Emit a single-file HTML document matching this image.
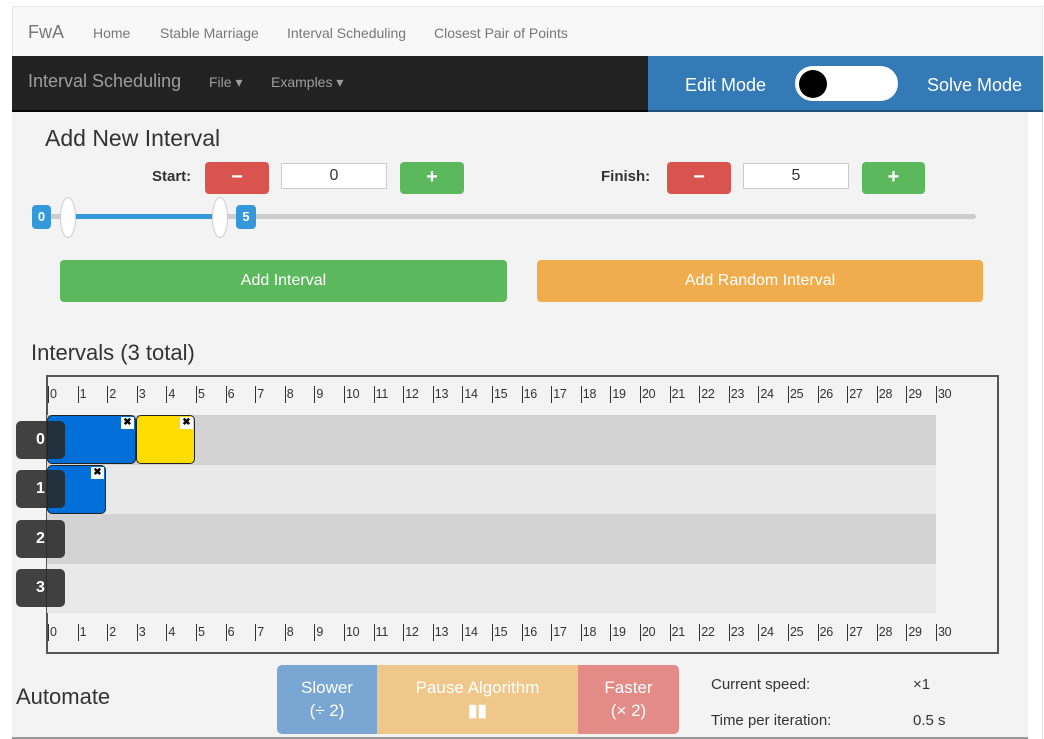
<!DOCTYPE html>
<html><head><meta charset="utf-8"><style>
*{box-sizing:border-box;margin:0;padding:0}
body{width:1044px;height:739px;background:#fff;font-family:"Liberation Sans",Arial,sans-serif;position:relative;overflow:hidden;color:#333}
.a{position:absolute}
.nav1{left:12px;top:6px;width:1031px;height:50px;background:#f8f8f8;border:1px solid #e7e7e7;border-bottom:none}
.nav1 span{position:absolute;top:18px;font-size:14px;color:#777}
.dark{left:12px;top:56px;width:636px;height:56px;background:#222;border-bottom:2px solid #080808}
.blue{left:648px;top:56px;width:395px;height:56px;background:#337ab7;border-bottom:2px solid #1f4e78}
.content{left:12px;top:112px;width:1016px;height:627px;background:#f3f3f3}
.btn{position:absolute;border-radius:4px;color:#fff;text-align:center;font-weight:bold}
.inp{position:absolute;background:#fff;border:1px solid #ccc;text-align:center;font-size:16px;line-height:24px}
.tick{position:absolute;font-size:12.5px;color:#333;border-left:1px solid #333;padding-left:1px;height:17px;line-height:17px;letter-spacing:-0.3px}
.lane{position:absolute;left:47px;width:889px;height:49.5px}
.lbl{position:absolute;left:16px;width:49px;height:38px;background:rgba(40,40,40,.88);border-radius:5px;color:#fff;font-weight:bold;font-size:16px;line-height:38px;text-align:center}
.iv{position:absolute;border:1px solid #222;border-radius:5px}
.x{position:absolute;top:1px;right:1px;width:13px;height:12px;background:#fff;font-size:10px;font-weight:bold;line-height:12px;text-align:center;color:#000}
</style></head><body>
<div class="a nav1">
<span style="left:15px;top:15px;font-size:18px">FwA</span>
<span style="left:80px">Home</span>
<span style="left:147px">Stable Marriage</span>
<span style="left:274px">Interval Scheduling</span>
<span style="left:421px">Closest Pair of Points</span>
</div>
<div class="a dark">
<span class="a" style="left:16px;top:15px;font-size:18px;color:#9d9d9d">Interval Scheduling</span>
<span class="a" style="left:197px;top:18px;font-size:14px;color:#9d9d9d">File ▾</span>
<span class="a" style="left:259px;top:18px;font-size:14px;color:#9d9d9d">Examples ▾</span>
</div>
<div class="a blue">
<span class="a" style="left:37px;top:19px;font-size:18px;color:#fff">Edit Mode</span>
<div class="a" style="left:147px;top:10px;width:103px;height:35px;background:#fff;border-radius:18px"></div>
<div class="a" style="left:151px;top:14px;width:28px;height:28px;background:#000;border-radius:50%"></div>
<span class="a" style="left:279px;top:19px;font-size:18px;color:#fff">Solve Mode</span>
</div>
<div class="a content"></div>
<div class="a" style="left:45px;top:125px;font-size:23px;color:#333">Add New Interval</div>
<div class="a" style="left:152px;top:168px;font-size:15px;font-weight:bold">Start:</div>
<div class="btn" style="left:205px;top:162px;width:64px;height:32px;background:#d9534f;font-size:20px;line-height:30px">−</div>
<div class="inp" style="left:281px;top:163px;width:106px;height:26px">0</div>
<div class="btn" style="left:400px;top:162px;width:64px;height:32px;background:#5cb85c;font-size:20px;line-height:30px">+</div>
<div class="a" style="left:601px;top:168px;font-size:15px;font-weight:bold">Finish:</div>
<div class="btn" style="left:667px;top:162px;width:64px;height:32px;background:#d9534f;font-size:20px;line-height:30px">−</div>
<div class="inp" style="left:743px;top:163px;width:106px;height:26px">5</div>
<div class="btn" style="left:862px;top:162px;width:63px;height:32px;background:#5cb85c;font-size:20px;line-height:30px">+</div>
<div class="a" style="left:40px;top:214px;width:936px;height:5px;background:#ccc;border-radius:3px"></div>
<div class="a" style="left:68px;top:214px;width:152px;height:5px;background:#3498db"></div>
<div class="btn" style="left:32px;top:205px;width:19px;height:24px;background:#3498db;font-size:13px;line-height:24px">0</div>
<div class="btn" style="left:236px;top:205px;width:20px;height:24px;background:#3498db;font-size:13px;line-height:24px">5</div>
<div class="a" style="left:60px;top:197px;width:16px;height:41px;background:#fff;border:1px solid #ccc;border-radius:50%"></div>
<div class="a" style="left:212px;top:197px;width:16px;height:41px;background:#fff;border:1px solid #ccc;border-radius:50%"></div>
<div class="btn" style="left:60px;top:260px;width:447px;height:42px;background:#5cb85c;font-weight:normal;font-size:16px;line-height:42px">Add Interval</div>
<div class="btn" style="left:537px;top:260px;width:446px;height:42px;background:#f0ad4e;font-weight:normal;font-size:16px;line-height:42px">Add Random Interval</div>
<div class="a" style="left:31px;top:340px;font-size:22px">Intervals (3 total)</div>
<div class="a" style="left:46px;top:375px;width:953px;height:279px;border:2px solid #555;border-left-width:2px"></div>
<div class="lane" style="top:415px;background:#d3d3d3"></div>
<div class="lane" style="top:464.5px;background:#e9e9e9"></div>
<div class="lane" style="top:514px;background:#d3d3d3"></div>
<div class="lane" style="top:563.5px;background:#e9e9e9"></div>
<div id="ticks"></div>
<div class="iv" style="left:47px;top:415px;width:89px;height:49px;background:#0070d8"><div class="x">✖</div></div>
<div class="iv" style="left:136px;top:415px;width:59px;height:49px;background:#ffdd00"><div class="x">✖</div></div>
<div class="iv" style="left:47px;top:465px;width:59px;height:49px;background:#0070d8"><div class="x">✖</div></div>
<div class="lbl" style="top:421px">0</div>
<div class="lbl" style="top:470px">1</div>
<div class="lbl" style="top:520px">2</div>
<div class="lbl" style="top:569px">3</div>
<div class="a" style="left:16px;top:684px;font-size:22px">Automate</div>
<div class="a" style="left:277px;top:665px;width:100px;height:69px;background:#79a6d2;border-radius:5px 0 0 5px;color:#fff;text-align:center;font-size:17px;line-height:23px;padding-top:11px">Slower<br>(÷ 2)</div>
<div class="a" style="left:377px;top:665px;width:201px;height:69px;background:#f0c78a;color:#fff;text-align:center;font-size:17px;line-height:23px;padding-top:11px">Pause Algorithm<br><b>▮▮</b></div>
<div class="a" style="left:578px;top:665px;width:101px;height:69px;background:#e28b87;border-radius:0 5px 5px 0;color:#fff;text-align:center;font-size:17px;line-height:23px;padding-top:11px">Faster<br>(× 2)</div>
<div class="a" style="left:711px;top:676px;font-size:15px">Current speed:</div>
<div class="a" style="left:913px;top:676px;font-size:15px">×1</div>
<div class="a" style="left:711px;top:712px;font-size:15px">Time per iteration:</div>
<div class="a" style="left:913px;top:712px;font-size:15px">0.5 s</div>
<div class="a" style="left:12px;top:737px;width:1016px;height:2px;background:#999"></div>
<div class="a" style="left:1042px;top:112px;width:1px;height:627px;background:#e7e7e7"></div>
<script>
var h='';for(var i=0;i<=30;i++){var x=48+i*29.6;h+='<div class="tick" style="left:'+x+'px;top:386px">'+i+'</div><div class="tick" style="left:'+x+'px;top:624px">'+i+'</div>';}
document.getElementById('ticks').innerHTML=h;
</script>
</body></html>
